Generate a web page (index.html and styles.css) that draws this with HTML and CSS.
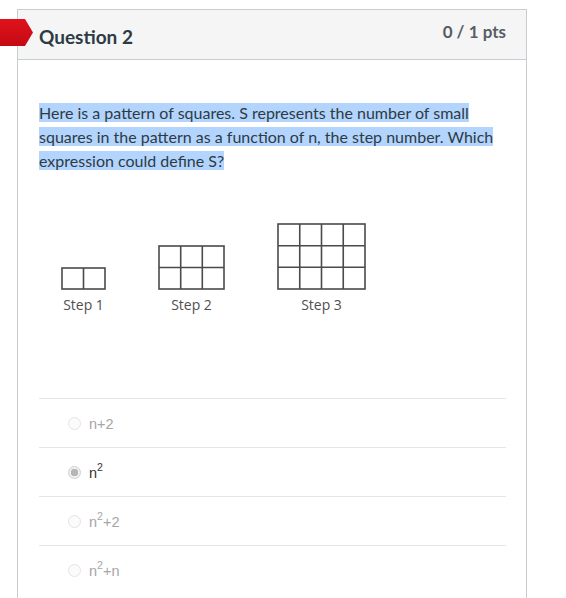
FILE: index.html
```html
<!DOCTYPE html>
<html>
<head>
<meta charset="utf-8">
<link rel="stylesheet" href="styles.css">
</head>
<body>
<div class="flag"></div>
<div class="card">
  <div class="header">
    <div class="title">Question 2</div>
    <div class="pts">0 / 1 pts</div>
  </div>
  <div class="content">
    <p class="qtext"><span class="sel">Here is a pattern of squares. S represents the number of small squares in the pattern as a function of n, the step number. Which expression could define S?</span></p>
    <div class="figure">
      <div class="step">
        <svg width="45" height="23" viewBox="0 0 45 23"><g fill="none" stroke="#4a4a4a" stroke-width="1.6"><rect x="1" y="1" width="43" height="21"/><line x1="22.5" y1="1" x2="22.5" y2="22"/></g></svg>
        <div class="label">Step 1</div>
      </div>
      <div class="step">
        <svg width="67" height="45" viewBox="0 0 67 45"><g fill="none" stroke="#4a4a4a" stroke-width="1.6"><rect x="1" y="1" width="65" height="43"/><line x1="22.7" y1="1" x2="22.7" y2="44"/><line x1="44.3" y1="1" x2="44.3" y2="44"/><line x1="1" y1="22.5" x2="66" y2="22.5"/></g></svg>
        <div class="label">Step 2</div>
      </div>
      <div class="step">
        <svg width="89" height="67" viewBox="0 0 89 67"><g fill="none" stroke="#4a4a4a" stroke-width="1.6"><rect x="1" y="1" width="87" height="65"/><line x1="22.75" y1="1" x2="22.75" y2="66"/><line x1="44.5" y1="1" x2="44.5" y2="66"/><line x1="66.25" y1="1" x2="66.25" y2="66"/><line x1="1" y1="22.7" x2="88" y2="22.7"/><line x1="1" y1="44.3" x2="88" y2="44.3"/></g></svg>
        <div class="label">Step 3</div>
      </div>
    </div>
    <div class="answers">
      <div class="answer"><span class="radio"></span><span class="atext">n+2</span></div>
      <div class="answer chosen"><span class="radio"></span><span class="atext">n<sup>2</sup></span></div>
      <div class="answer"><span class="radio"></span><span class="atext">n<sup>2</sup>+2</span></div>
      <div class="answer"><span class="radio"></span><span class="atext">n<sup>2</sup>+n</span></div>
    </div>
  </div>
</div>
</body>
</html>
```

FILE: styles.css
```css
html, body {
  margin: 0;
  padding: 0;
  background: #ffffff;
  overflow: hidden;
}
body {
  font-family: Lato, "Liberation Sans", sans-serif;
  color: #2d3b45;
  width: 566px;
  height: 598px;
  position: relative;
}
.flag {
  position: absolute;
  left: 0;
  top: 19px;
  width: 33px;
  height: 27px;
  background: linear-gradient(#e0121b, #c40a13);
  clip-path: polygon(0 0, 25px 0, 33px 50%, 25px 100%, 0 100%);
  z-index: 2;
}
.card {
  margin: 9px 0 0 17px;
  width: 508px;
  height: 600px;
  border: 1px solid #c7cdd1;
  border-bottom: none;
}
.header {
  height: 49px;
  background: #f5f5f5;
  border-bottom: 1px solid #c7cdd1;
  display: flex;
  justify-content: space-between;
  align-items: flex-start;
  padding: 0 20px 0 21px;
}
.title {
  font-weight: 700;
  font-size: 19px;
  line-height: 22px;
  margin-top: 16px;
  color: #2d3b45;
}
.pts {
  font-weight: 700;
  font-size: 17px;
  line-height: 20px;
  margin-top: 12px;
  color: #555e66;
}
.content {
  padding: 41px 20px 0 21px;
}
.qtext {
  margin: 0;
  font-size: 16px;
  line-height: 24px;
  color: #2d3b45;
  width: 460px;
}
.sel {
  background: #b3d4fc;
}
.figure {
  display: flex;
  align-items: flex-end;
  gap: 52px;
  margin: 50px 0 0 22px;
}
.step {
  display: flex;
  flex-direction: column;
  align-items: center;
}
.step svg {
  display: block;
}
.label {
  font-family: "Open Sans", sans-serif;
  font-size: 14px;
  line-height: 16px;
  color: #505050;
  margin-top: 7px;
}
.answers {
  margin-top: 85px;
}
.answer {
  height: 48px;
  border-top: 1px solid #e6e6e6;
  display: flex;
  align-items: center;
  padding-left: 29px;
  font-family: "Liberation Sans", Arial, sans-serif;
  font-size: 14.5px;
  color: #a6a6a6;
}
.answer.chosen {
  color: #333333;
}
.radio {
  width: 13px;
  height: 13px;
  border-radius: 50%;
  border: 1px solid #e4e4e4;
  background: #fbfbfb;
  box-sizing: border-box;
  margin-right: 8px;
  position: relative;
  top: 0px;
}
.chosen .radio {
  border-color: #d0d0d0;
  background: radial-gradient(circle, #b5b5b5 0 3.5px, #f0f0f0 4px);
}
.atext {
  line-height: 16px;
  position: relative;
  top: 1px;
}
sup {
  font-size: 10.5px;
  line-height: 0;
  vertical-align: 7px;
}
```
